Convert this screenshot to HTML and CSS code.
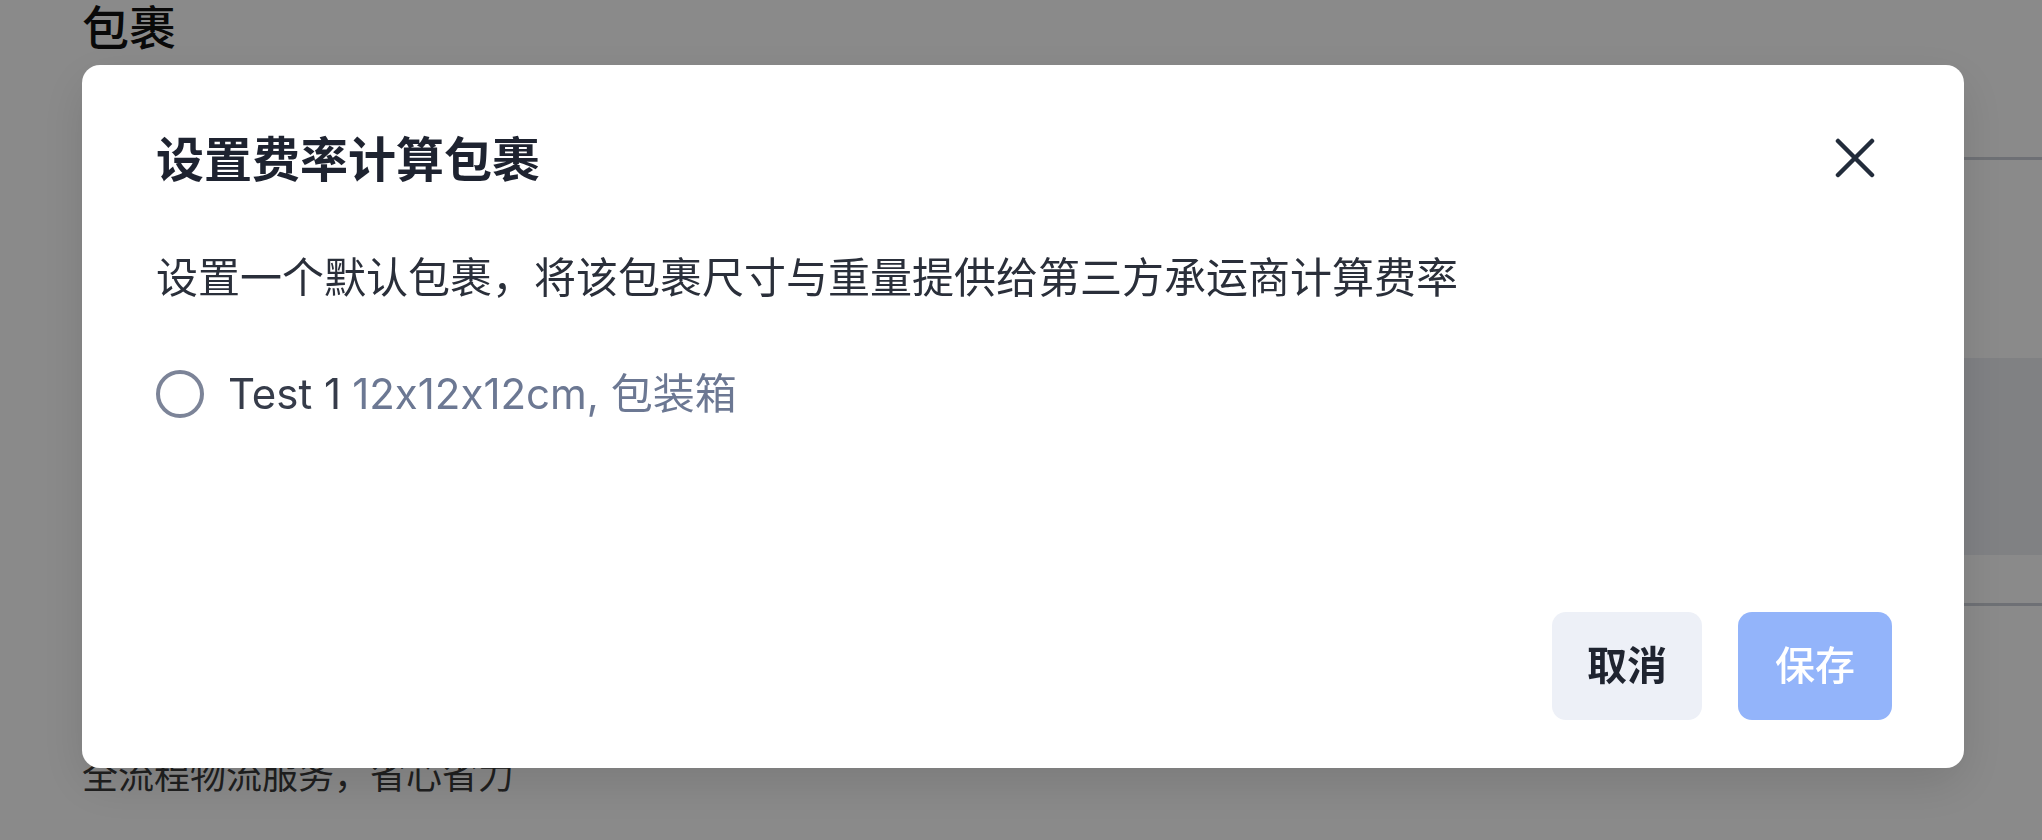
FILE: index.html
```html
<!DOCTYPE html>
<html lang="zh-CN">
<head>
<meta charset="utf-8">
<title>设置费率计算包裹</title>
<link rel="stylesheet" href="styles.css">
</head>
<body>
<div class="page">
  <h2 class="page-title">包裹</h2>
  <div class="rule rule-first"></div>
  <div class="row-band"></div>
  <div class="rule rule-second"></div>
  <p class="page-note">全流程物流服务，省心省力</p>
</div>

<div class="overlay">
  <div class="modal" role="dialog" aria-modal="true">
    <div class="modal-header">
      <h3 class="modal-title">设置费率计算包裹</h3>
      <button class="close-btn" aria-label="关闭">
        <svg width="40" height="40" viewBox="0 0 40 40" fill="none">
          <path d="M3 3 L37 37 M37 3 L3 37" stroke="#222c3b" stroke-width="4.5" stroke-linecap="round"/>
        </svg>
      </button>
    </div>
    <p class="modal-desc">设置一个默认包裹，将该包裹尺寸与重量提供给第三方承运商计算费率</p>
    <label class="option">
      <span class="radio"></span>
      <span class="option-name">Test 1</span>
      <span class="option-meta">12x12x12cm, 包装箱</span>
    </label>
    <div class="modal-footer">
      <button class="btn btn-cancel">取消</button>
      <button class="btn btn-save">保存</button>
    </div>
  </div>
</div>
</body>
</html>
```

FILE: styles.css
```css
* {
  box-sizing: border-box;
}

html, body {
  margin: 0;
  padding: 0;
  height: 100%;
  overflow: hidden;
}

body {
  font-family: "Inter", "Noto Sans CJK SC", sans-serif;
  font-feature-settings: "calt" 0;
  background: #ffffff;
  color: #1f2430;
}

/* underlying page */
.page {
  padding-left: 82px;
  padding-top: 4px;
  display: flex;
  flex-direction: column;
}

.page-title {
  margin: 0;
  font-size: 47px;
  line-height: 1;
  font-weight: 500;
  color: #111111;
}

.rule {
  height: 3px;
  background: #ccd0d8;
}

.rule-first {
  margin-top: 106px;
}

.row-band {
  margin-top: 198px;
  height: 197px;
  background: #eceef3;
}

.rule-second {
  margin-top: 48px;
}

.page-note {
  margin: 152px 0 0;
  font-size: 36px;
  line-height: 1;
  color: #3a3a3a;
}

/* overlay + modal */
.overlay {
  position: fixed;
  inset: 0;
  background: rgba(0, 0, 0, 0.46);
  padding: 65px 0 0 82px;
}

.modal {
  width: 1882px;
  height: 703px;
  background: #ffffff;
  border-radius: 18px;
  box-shadow: 0 16px 48px rgba(0, 0, 0, 0.12);
  padding: 71px 72px 48px 74px;
  display: flex;
  flex-direction: column;
}

.modal-header {
  display: flex;
  align-items: center;
  justify-content: space-between;
  height: 48px;
  padding-right: 17px;
}

.modal-title {
  margin: 0;
  font-size: 48px;
  line-height: 1;
  font-weight: 700;
  color: #1e2330;
}

.close-btn {
  border: 0;
  background: none;
  padding: 0;
  width: 40px;
  height: 40px;
  display: flex;
  margin-top: -5px;
}

.modal-desc {
  margin: 73px 0 0;
  font-size: 42px;
  line-height: 1;
  color: #2a2f3a;
}

.option {
  margin-top: 71px;
  display: flex;
  align-items: center;
  font-size: 42px;
  line-height: 1;
}

.radio {
  width: 48px;
  height: 48px;
  border-radius: 50%;
  border: 4px solid #7c8498;
  margin-right: 24px;
  flex: none;
}

.option-name {
  color: #363c4a;
  margin-right: 11px;
}

.option-meta {
  color: #6c7893;
}

.modal-footer {
  margin-top: auto;
  display: flex;
  justify-content: flex-end;
  gap: 36px;
}

.btn {
  height: 108px;
  border: 0;
  border-radius: 14px;
  padding: 0 35px;
  font-family: "Inter", "Noto Sans CJK SC", sans-serif;
  font-size: 40px;
  line-height: 1;
}

.btn-cancel {
  background: #edf0f7;
  color: #1f2430;
  font-weight: 700;
}

.btn-save {
  background: #93b4fa;
  color: #ffffff;
  font-weight: 500;
  padding: 0 37px;
}
```
